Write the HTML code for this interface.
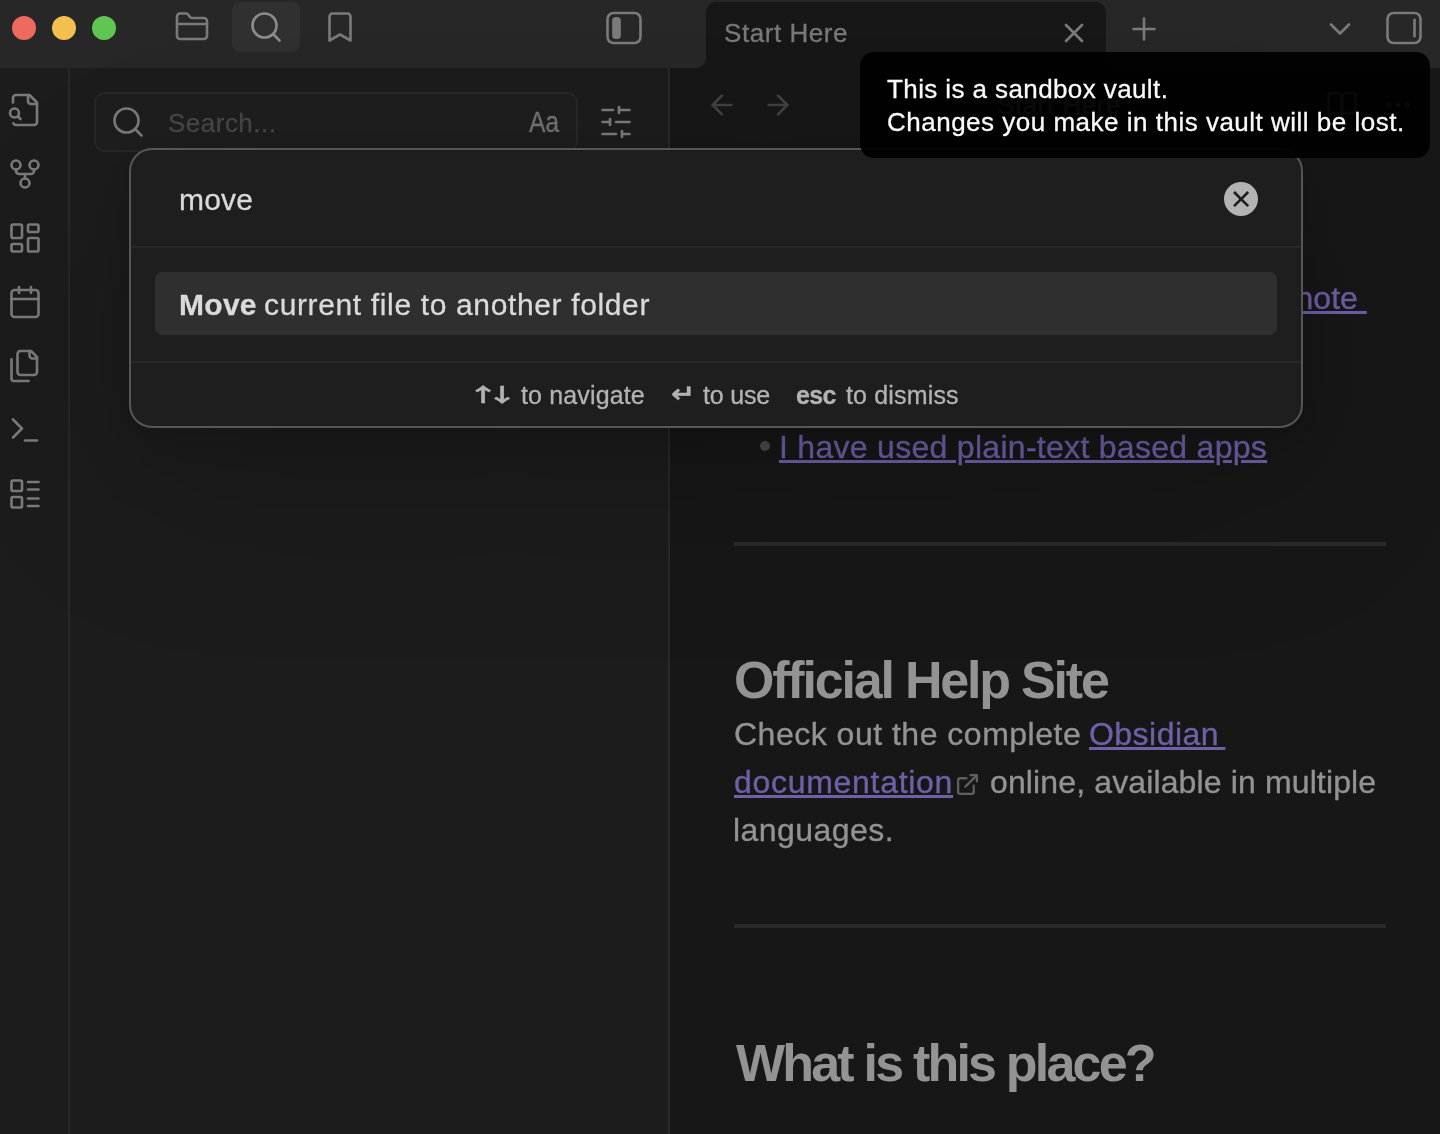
<!DOCTYPE html>
<html lang="en">
<head>
<meta charset="utf-8">
<title>Start Here - Obsidian Sandbox</title>
<style>
*{box-sizing:border-box;margin:0;padding:0}
html,body{width:1440px;height:1134px;overflow:hidden;background:#171717}
body{position:relative;font-family:"Liberation Sans",Arial,sans-serif;color:#939393;-webkit-font-smoothing:antialiased}
.abs{position:absolute}
.p,.h2,.ins,.sg,.tp,#minput,#ph,#aa,#tabtitle,#vtitle{will-change:transform}
.ins,.sg,.tp,#minput,#ph,#tabtitle,#vtitle{-webkit-text-stroke:.3px}
svg.ic{position:absolute;width:36px;height:36px;fill:none;stroke:#7a7a7a;stroke-width:1.75;stroke-linecap:round;stroke-linejoin:round;overflow:visible}
/* title bar */
#titlebar{left:0;top:0;width:1440px;height:68px;background:#272727}
#tabbg{left:706px;top:2px;width:400px;height:66px;background:#171717;border-radius:10px 10px 0 0}
#tabcl{left:696px;top:58px;width:10px;height:10px;background:radial-gradient(circle at 0 0,#272727 9.5px,#171717 10.5px)}
#tabcr{left:1106px;top:58px;width:10px;height:10px;background:radial-gradient(circle at 100% 0,#272727 9.5px,#171717 10.5px)}
.tl{width:24px;height:24px;border-radius:50%;top:16px}
#searchtab{left:232px;top:2px;width:68px;height:50px;border-radius:8px;background:#303030}
#tabtitle{left:724px;top:18px;font-size:26px;line-height:30px;color:#797979;letter-spacing:.55px;white-space:nowrap}
/* ribbon + sidebar */
#ribbon{left:0;top:68px;width:70px;height:1066px;background:#1c1c1c;border-right:2px solid #272727}
#sidebar{left:70px;top:68px;width:600px;height:1066px;background:#1c1c1c;border-right:2px solid #282828}
#searchbox{left:94px;top:92px;width:484px;height:60px;border:2px solid #272727;border-radius:11px;background:#1e1e1e}
#ph{left:168px;top:108px;font-size:26px;line-height:30px;color:#474747;white-space:nowrap;letter-spacing:.49px}
#aa{left:529px;top:105px;font-size:29px;line-height:34px;color:#747474;-webkit-text-stroke:.3px;white-space:nowrap;transform:scaleX(.85);transform-origin:0 0}
/* content */
#content{left:670px;top:68px;width:770px;height:1066px;background:#171717}
.p{font-size:32px;line-height:48px;color:#939393;white-space:pre;-webkit-text-stroke:.35px}
.p a,.lnk{color:#715fa8;text-decoration:underline;text-decoration-thickness:3px;text-underline-offset:2px}
.h2{font-size:52px;line-height:60px;font-weight:700;color:#939393;white-space:nowrap;letter-spacing:-1.7px}
.hr{left:734px;width:652px;height:4px;background:#292929}
/* modal */
#modal{left:129px;top:148px;width:1174px;height:280px;background:#1e1e1e;border:2px solid #565656;border-radius:23px;box-shadow:0 3.6px 14.6px rgba(0,0,0,.071),0 12.6px 49.4px rgba(0,0,0,.112),0 60px 180px rgba(0,0,0,.2)}
.mdiv{left:131px;width:1170px;height:2px;background:#282828}
#minput{letter-spacing:.17px;left:178.700px;top:182px;font-size:30px;line-height:36px;color:#dadada;white-space:nowrap}
#clear{left:1224px;top:182px;width:34px;height:34px;border-radius:50%;background:#b3b3b3}
#sugg{left:155px;top:272px;width:1122px;height:63px;border-radius:7px;background:#2f2f2f}
.sg{top:287px;font-size:30px;line-height:36px;color:#dadada;white-space:nowrap;letter-spacing:.55px}
.ins{font-size:25px;line-height:30px;color:#b3b3b3;white-space:nowrap;top:380px}
.ins b{font-weight:700}
.arr{font-family:"Noto Sans CJK SC","DejaVu Sans",sans-serif;font-weight:700;font-size:19px;transform-origin:0 50%;transform:scaleX(1.7);top:378.5px}
#i2a{font-family:"DejaVu Sans",sans-serif;font-size:25px;transform:scaleX(1.15);top:379px}
/* tooltip */
#tip{left:860px;top:52px;width:570px;height:106px;border-radius:14px;background:rgba(0,0,0,.93)}
.tp{color:#fafafa;font-size:26px;line-height:33px;white-space:nowrap;letter-spacing:.4px}
</style>
</head>
<body>
<!-- workspace backgrounds -->
<div id="content" class="abs"></div>
<div id="ribbon" class="abs"></div>
<div id="sidebar" class="abs"></div>
<div id="titlebar" class="abs"></div>
<div id="tabcl" class="abs"></div>
<div id="tabcr" class="abs"></div>
<div id="tabbg" class="abs"></div>

<!-- traffic lights -->
<div class="abs tl" style="left:12px;background:#ec6a5e"></div>
<div class="abs tl" style="left:52px;background:#f4bf4f"></div>
<div class="abs tl" style="left:92px;background:#61c554"></div>

<!-- left tab header icons -->
<div id="searchtab" class="abs"></div>
<svg class="ic" style="left:174px;top:9px" viewBox="0 0 24 24"><path d="M20 20a2 2 0 0 0 2-2V8a2 2 0 0 0-2-2h-7.9a2 2 0 0 1-1.69-.9L9.6 3.9A2 2 0 0 0 7.930 3H4a2 2 0 0 0-2 2v13a2 2 0 0 0 2 2Z"/><path d="M2 10h20"/></svg>
<svg class="ic" style="left:248px;top:9px;stroke:#8c8c8c" viewBox="0 0 24 24"><circle cx="11" cy="11" r="8"/><path d="m21 21-4.300-4.300"/></svg>
<svg class="ic" style="left:322px;top:9px" viewBox="0 0 24 24"><path d="m19 21-7-4-7 4V5a2 2 0 0 1 2-2h10a2 2 0 0 1 2 2v16z"/></svg>
<svg class="ic" style="left:606px;top:10px" viewBox="0 0 24 24"><rect x="1" y="2" width="22" height="20" rx="4"/><rect x="5" y="5.500" width="4" height="13" rx="1.500" fill="#7a7a7a"/></svg>

<!-- tab -->
<div id="tabtitle" class="abs">Start Here</div>
<svg class="ic" style="left:1058px;top:17px;width:32px;height:32px;stroke-width:2" viewBox="0 0 24 24"><path d="M18 6 6 18"/><path d="m6 6 12 12"/></svg>
<svg class="ic" style="left:1126px;top:11px" viewBox="0 0 24 24"><path d="M5 12h14"/><path d="M12 5v14"/></svg>
<svg class="ic" style="left:1322px;top:11px" viewBox="0 0 24 24"><path d="m6 9 6 6 6-6"/></svg>
<svg class="ic" style="left:1386px;top:10px" viewBox="0 0 24 24"><rect x="1" y="2" width="22" height="20" rx="4"/><path d="M19 6.500v11"/></svg>

<!-- ribbon icons -->
<svg class="ic" style="left:7px;top:92px" viewBox="0 0 24 24"><path d="M14 2v4a2 2 0 0 0 2 2h4"/><path d="M4.268 21a2 2 0 0 0 1.727 1H18a2 2 0 0 0 2-2V7l-5-5H6a2 2 0 0 0-2 2v3"/><path d="m9 18-1.500-1.500"/><circle cx="5" cy="14" r="3"/></svg>
<svg class="ic" style="left:7px;top:156px" viewBox="0 0 24 24"><circle cx="12" cy="18" r="3"/><circle cx="6" cy="6" r="3"/><circle cx="18" cy="6" r="3"/><path d="M18 9v1a2 2 0 0 1-2 2H8a2 2 0 0 1-2-2V9"/><path d="M12 12v3"/></svg>
<svg class="ic" style="left:7px;top:220px" viewBox="0 0 24 24"><rect x="3" y="3" width="7" height="9" rx="1"/><rect x="14" y="3" width="7" height="5" rx="1"/><rect x="14" y="12" width="7" height="9" rx="1"/><rect x="3" y="16" width="7" height="5" rx="1"/></svg>
<svg class="ic" style="left:7px;top:284px" viewBox="0 0 24 24"><rect x="3" y="4" width="18" height="18" rx="2"/><path d="M16 2v4"/><path d="M8 2v4"/><path d="M3 10h18"/></svg>
<svg class="ic" style="left:7px;top:348px" viewBox="0 0 24 24"><path d="M20 7h-3a2 2 0 0 1-2-2V2"/><path d="M9 18a2 2 0 0 1-2-2V4a2 2 0 0 1 2-2h7l4 4v10a2 2 0 0 1-2 2Z"/><path d="M3 7.600v12.800A1.600 1.600 0 0 0 4.600 22h9.800"/></svg>
<svg class="ic" style="left:7px;top:412px" viewBox="0 0 24 24"><polyline points="4 17 10 11 4 5"/><path d="M12 19h8"/></svg>
<svg class="ic" style="left:7px;top:476px" viewBox="0 0 24 24"><rect x="3" y="14" width="7" height="7" rx="1"/><rect x="3" y="3" width="7" height="7" rx="1"/><path d="M14 4h7"/><path d="M14 9h7"/><path d="M14 15h7"/><path d="M14 20h7"/></svg>

<!-- sidebar search -->
<div id="searchbox" class="abs"></div>
<svg class="ic" style="left:110px;top:104px" viewBox="0 0 24 24"><circle cx="11" cy="11" r="8"/><path d="m21 21-4.300-4.300"/></svg>
<div id="ph" class="abs">Search...</div>
<div id="aa" class="abs">Aa</div>
<svg class="ic" style="left:598px;top:104px" viewBox="0 0 24 24"><path d="M21 4h-7"/><path d="M10 4H3"/><path d="M21 12h-9"/><path d="M8 12H3"/><path d="M21 20h-5"/><path d="M12 20H3"/><path d="M14 2v4"/><path d="M8 10v4"/><path d="M16 18v4"/></svg>

<!-- view header -->
<svg class="ic" style="left:706px;top:89px;width:32px;height:32px;stroke-width:2;stroke:#414141" viewBox="0 0 24 24"><path d="m12 19-7-7 7-7"/><path d="M19 12H5"/></svg>
<svg class="ic" style="left:762px;top:89px;width:32px;height:32px;stroke-width:2;stroke:#414141" viewBox="0 0 24 24"><path d="M5 12h14"/><path d="m12 5 7 7-7 7"/></svg>
<div class="abs" id="vtitle" style="left:997px;top:89px;font-size:26px;line-height:32px;color:#939393;letter-spacing:.55px;white-space:nowrap">Start Here</div>
<svg class="ic" style="left:1326px;top:89px;width:32px;height:32px;stroke-width:2" viewBox="0 0 24 24"><path d="M2 3h6a4 4 0 0 1 4 4v14a3 3 0 0 0-3-3H2z"/><path d="M22 3h-6a4 4 0 0 0-4 4v14a3 3 0 0 1 3-3h7z"/></svg>
<svg class="ic" style="left:1382px;top:89px;width:32px;height:32px;stroke-width:2" viewBox="0 0 24 24"><circle cx="12" cy="12" r="1"/><circle cx="19" cy="12" r="1"/><circle cx="5" cy="12" r="1"/></svg>

<!-- document content -->
<div class="abs p" id="l0" style="right:73px;top:274px"><a>I have used note-taking apps like Evernote </a></div>
<div class="abs" style="left:760px;top:441px;width:10px;height:10px;border-radius:50%;background:#4a4a4a"></div>
<div class="abs p" id="l1" style="left:779px;top:422.5px;letter-spacing:.29px"><a>I have used plain-text based apps</a></div>
<div class="abs hr" style="top:542px"></div>
<div class="abs h2" id="h1" style="left:734px;top:650px;letter-spacing:-2.2px">Official Help Site</div>
<div class="abs p" id="l2a" style="left:733.6px;top:710px;letter-spacing:.5px">Check out the complete</div>
<div class="abs p" id="l2b" style="left:1088.5px;top:710px;letter-spacing:.46px"><a>Obsidian<span style="letter-spacing:-2.500px"> </span></a></div>
<div class="abs p" id="l3a" style="left:734px;top:758px;letter-spacing:.7px"><a>documentation</a></div>
<svg class="abs" style="left:955px;top:772px;width:25px;height:25px;fill:none;stroke:#5f5f5f;stroke-width:2.200;stroke-linecap:round;stroke-linejoin:round" viewBox="0 0 24 24"><path d="M15 3h6v6"/><path d="M10 14 21 3"/><path d="M18 13v6a2 2 0 0 1-2 2H5a2 2 0 0 1-2-2V8a2 2 0 0 1 2-2h6"/></svg>
<div class="abs p" id="l3b" style="left:989.6px;top:758px;letter-spacing:.13px">online, available in multiple</div>
<div class="abs p" id="l4" style="left:733px;top:806px;letter-spacing:.45px">languages.</div>
<div class="abs hr" style="top:924px"></div>
<div class="abs h2" id="h2" style="left:735.5px;top:1033px;letter-spacing:-2.8px">What is this place?</div>

<!-- command palette -->
<div id="modal" class="abs"></div>
<div class="abs mdiv" style="top:246px"></div>
<div class="abs mdiv" style="top:361px"></div>
<div id="minput" class="abs">move</div>
<div id="clear" class="abs"><svg style="position:absolute;left:0;top:0;width:34px;height:34px;fill:none;stroke:#1e1e1e;stroke-width:2.600" viewBox="0 0 34 34"><path d="M10 10 24.200 24.200"/><path d="M24.200 10 10 24.200"/></svg></div>
<div id="sugg" class="abs"></div>
<div id="sg1" class="abs sg" style="left:178.5px;letter-spacing:.28px"><b>Move</b></div>
<div id="sg2" class="abs sg" style="left:264.4px;letter-spacing:.64px">current file to another folder</div>
<div class="abs ins arr" id="i1a" style="left:466.6px">↑</div>
<div class="abs ins arr" id="i1c" style="left:486.3px">↓</div>
<div class="abs ins" id="i1b" style="left:520.6px;letter-spacing:.14px">to navigate</div>
<div class="abs ins arr" id="i2a" style="left:671px">↵</div>
<div class="abs ins" id="i2b" style="left:702.6px;letter-spacing:-.18px">to use</div>
<div class="abs ins" id="i3a" style="left:795.7px;letter-spacing:-.6px"><b>esc</b></div>
<div class="abs ins" id="i3b" style="left:845.6px;letter-spacing:.16px">to dismiss</div>

<!-- tooltip -->
<div id="tip" class="abs"></div>
<div id="tp1" class="abs tp" style="left:886.5px;top:73px">This is a sandbox vault.</div>
<div id="tp2" class="abs tp" style="left:886.5px;top:106px;letter-spacing:.5px">Changes you make in this vault will be lost.</div>
</body>
</html>
